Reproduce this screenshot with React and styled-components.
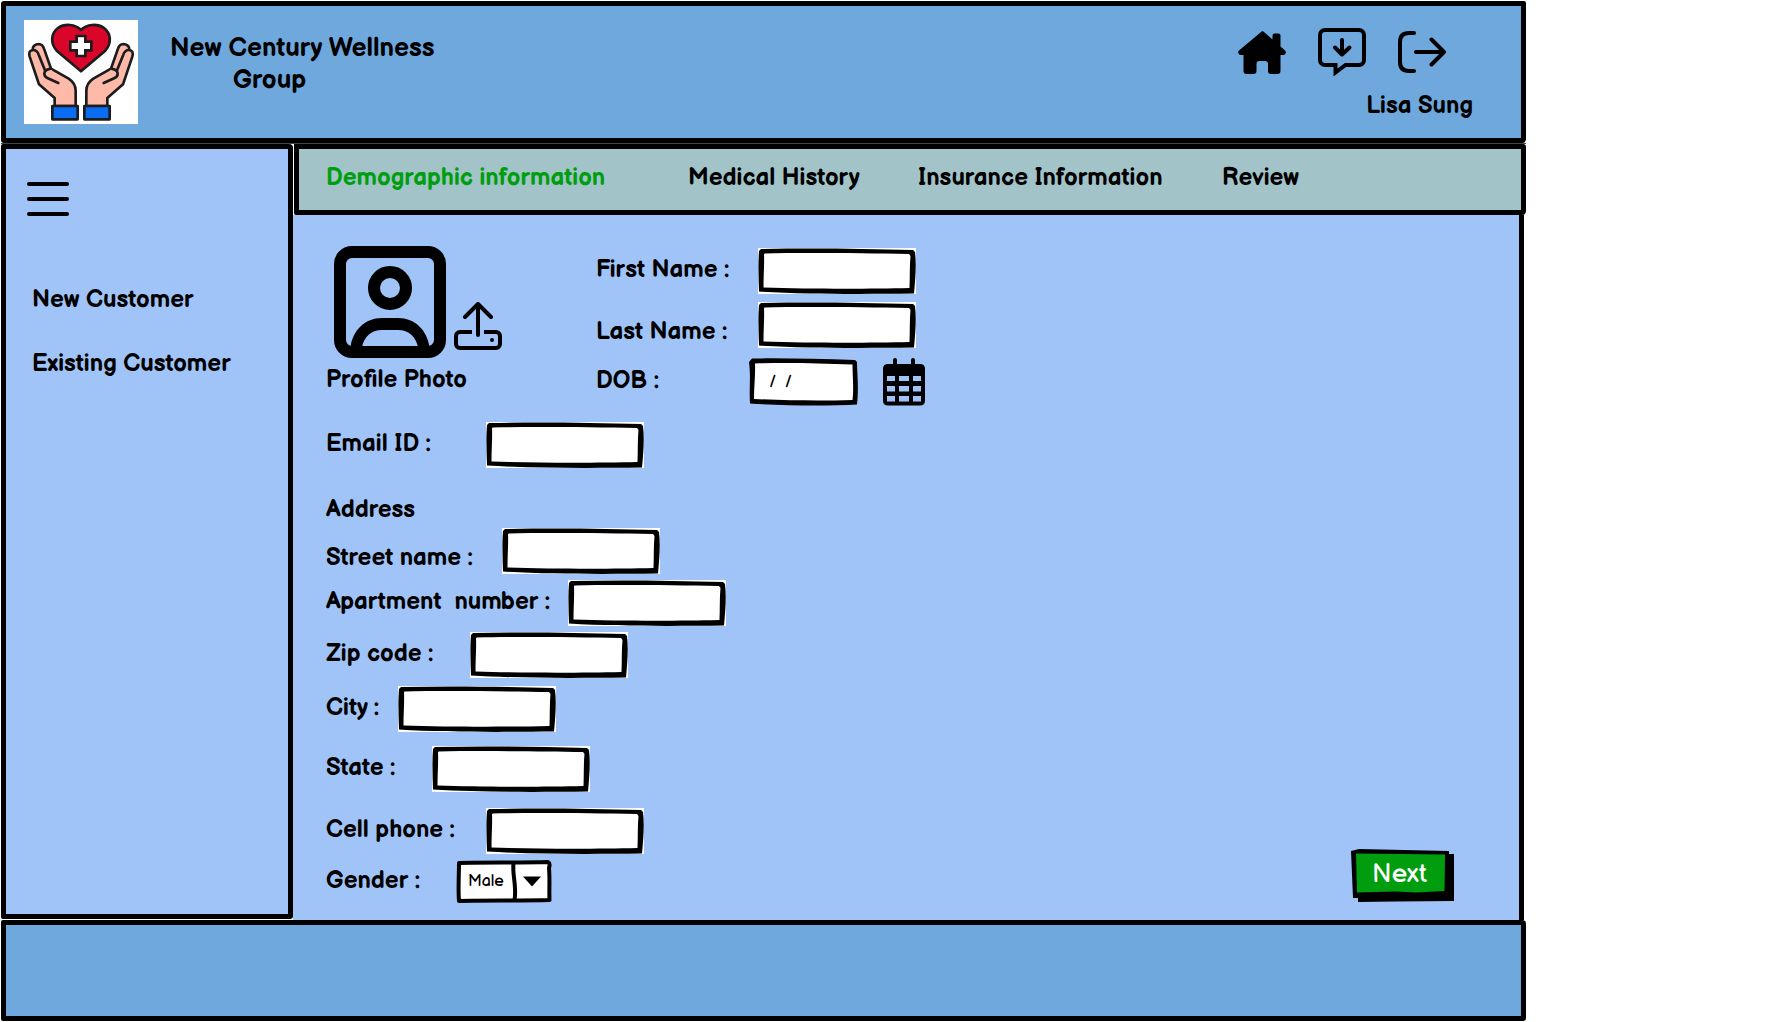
import React from "react";
import styled, { createGlobalStyle } from "styled-components";

const ink = "#000";
const sky = "#6fa8dc";
const mist = "#a0c4f8";
const sage = "#a2c4c9";
const leaf = "#009e0f";
const hand = `"Balsamiq Sans", Lato, "Open Sans", sans-serif`;

/* Hand-drawn frames, used as stretchable backgrounds of the controls. */
const sketch = (w, h, body) =>
  `url("data:image/svg+xml,${encodeURIComponent(
    `<svg xmlns="http://www.w3.org/2000/svg" viewBox="0 0 ${w} ${h}" preserveAspectRatio="none">${body}</svg>`
  )}")`;

const fieldFrame = sketch(
  158,
  46,
  `<rect width="158" height="46" fill="#fff"/>
   <path fill="#000" fill-rule="evenodd" d="M3 1C50 0 100 .5 155 2L157 4C158.500 16 157.500 30 156 45.500C110 46 50 46.500 1 43.500C.5 30 0 15 1 3Z
   M6.500 5.500C50 4.500 110 5.500 151 6L152.500 8C151.500 18 152 30 151.500 40C110 41 50 41 5.500 39.500C5.500 28 6.500 15 6 6.500Z"/>`
);

const dateFrame = sketch(
  109,
  48,
  `<path fill="#fff" d="M3 3H106V44H3Z"/>
   <path fill="#000" fill-rule="evenodd" d="M3 .5C35 0 70 1 106 2L108 4C108 14 110 30 108 46.500C80 48 40 48 1 45.500C0 30 2 20 0 4Z
   M6 5.500C40 4.500 70 5.500 103.500 6.500C103.500 18 105 30 103.500 42C70 43 40 42.500 5 41C5 28 6.500 18 6 5.500Z"/>`
);

const selectFrame = sketch(
  96,
  44,
  `<path fill="#fff" stroke="#000" stroke-width="4" stroke-linejoin="round" d="M3 3C30 2 60 3 92 2C94 3 94 5 93 8C94 20 93 32 93.500 41C60 42 30 41 3 42C2 30 3 15 3 3Z"/>
   <path fill="none" stroke="#000" stroke-width="4" d="M57.500 3C56 16 61 26 58.500 41"/>
   <path fill="#000" d="M67 17H85L76 27Z"/>`
);

const buttonFrame = sketch(
  103,
  53,
  `<path fill="#000" d="M0 2L8 0L98 2V5H103V52L45 52.500L7 53V49H2Z"/>
   <path fill="#009e0f" d="M5 4.500L94 5.500L93.500 42L65 43.500L45 42.500L6 43.500Z"/>`
);

const GlobalStyle = createGlobalStyle`
  *, *::before, *::after { box-sizing: border-box; }
  body {
    margin: 0;
    background: #fff;
    color: ${ink};
    font: 700 24px/28px ${hand};
  }
  a { color: inherit; text-decoration: none; }
  svg { display: block; }
`;

const Page = styled.div`
  padding: 1px 240px 1px 1px;
`;

const Header = styled.header`
  display: flex;
  align-items: flex-start;
  min-height: 142px;
  padding: 14px 48px 14px 18px;
  border: 5px solid ${ink};
  border-radius: 3px 2px 4px 3px;
  background: ${sky};
`;

const LogoBox = styled.a`
  width: 114px;
  height: 104px;
  background: #fff;
`;

const Brand = styled.h1`
  margin: 0;
  padding: 13px 0 0 32px;
  font-size: 26px;
  line-height: 32px;
`;

const BrandTail = styled.span`
  display: block;
  padding-left: 63px;
`;

const Account = styled.div`
  display: flex;
  flex-direction: column;
  align-items: flex-end;
  gap: 16px;
  margin-left: auto;
  padding-top: 8px;
`;

const Toolbar = styled.nav`
  display: flex;
  gap: 32px;
  padding-right: 27px;
`;

const IconButton = styled.button`
  display: block;
  padding: 0;
  border: 0;
  background: none;
  color: inherit;
  cursor: pointer;
`;

const Body = styled.div`
  display: flex;
  border-top: 1px solid #444;
`;

const Sidebar = styled.aside`
  flex: none;
  width: 292px;
  margin-bottom: 1px;
  padding: 33px 16px 16px 21px;
  border: 5px solid ${ink};
  border-radius: 2px 4px 3px 2px;
  background: ${mist};
`;

const SideNav = styled.nav`
  display: flex;
  flex-direction: column;
  gap: 36px;
  margin-top: 68px;
  padding-left: 5px;
`;

const Main = styled.main`
  display: flex;
  flex: 1;
  flex-direction: column;
  min-width: 0;
`;

const Tabs = styled.nav`
  display: grid;
  grid-template-columns: 362px 230px 304px auto;
  min-height: 71px;
  padding: 15px 0 0 27px;
  margin-left: 1px;
  border: 5px solid ${ink};
  border-radius: 0 3px 4px 2px;
  background: ${sage};
`;

const Tab = styled.a`
  color: ${({ $active }) => ($active ? leaf : "inherit")};
`;

const Content = styled.form`
  display: flex;
  flex: 1;
  justify-content: space-between;
  margin-right: 2px;
  padding: 31px 65px 17px 33px;
  border-right: 5px solid ${ink};
  background: ${mist};
`;

const Fields = styled.div`
  display: flex;
  flex-direction: column;
`;

const Intro = styled.div`
  display: grid;
  grid-template-columns: 270px auto;
`;

const Profile = styled.div`
  display: flex;
  flex-direction: column;
  gap: 8px;
`;

const Photo = styled.div`
  display: flex;
  align-items: flex-end;
  gap: 8px;
  padding-left: 8px;
`;

const Upload = styled(IconButton)`
  padding-bottom: 8px;
`;

const Names = styled.div`
  padding-top: 2px;
`;

const Row = styled.div`
  display: flex;
  align-items: center;
  margin-top: ${({ $space = 0 }) => $space}px;
`;

const Label = styled.label`
  width: ${({ $width }) => $width}px;
  padding: ${({ $low }) => ($low ? "14px 0 0" : "0 0 2px")};
  white-space: pre;
`;

const Group = styled.h2`
  margin: 0;
  padding: 28px 0 4px;
  font: inherit;
`;

const TextField = styled.input`
  width: 158px;
  height: 46px;
  padding: 6px 12px;
  border: 0;
  background: ${fieldFrame} center / 100% 100% no-repeat;
  font: 400 16px/20px ${hand};
  outline: 0;
`;

const DateField = styled(TextField)`
  width: 109px;
  height: 48px;
  margin-right: 25px;
  padding: 6px 20px;
  background-image: ${dateFrame};
`;

const Select = styled.select`
  width: 96px;
  height: 43px;
  padding: 0 40px 0 12px;
  border: 0;
  appearance: none;
  background: ${selectFrame} center / 100% 100% no-repeat;
  color: ${ink};
  font: 400 16px/20px ${hand};
  outline: 0;
`;

const NextButton = styled.button`
  align-self: flex-end;
  width: 103px;
  height: 53px;
  margin-bottom: 1px;
  padding: 0 6px 2px 0;
  border: 0;
  background: ${buttonFrame} center / 100% 100% no-repeat;
  color: #fff;
  font: 400 26px/32px ${hand};
  cursor: pointer;
`;

const Footer = styled.footer`
  min-height: 101px;
  border: 5px solid ${ink};
  border-radius: 2px 4px 3px 2px;
  background: ${sky};
`;

const Hand = () => (
  <g stroke="#1c1c1e" strokeWidth="8" strokeLinejoin="round" strokeLinecap="round">
    <path
      fill="#ffb9a8"
      d="M164 318V294L117 253L89 170Q84 152 98 150Q97 134 116 132Q128 133 132 146L153 206L206 236Q227 250 227 272V318Z"
    />
    <path fill="none" d="M98 150Q111 149 116 164L138 218" />
    <path fill="#ffb9a8" d="M153 206Q134 208 133 221Q133 230 142 234L175 249" />
    <path fill="#0a6cf0" d="M157 318H233V358H157Z" />
  </g>
);

const Logo = () => (
  <svg viewBox="72 60 342 312" width="114" height="104" aria-hidden="true">
    <Hand />
    <g transform="translate(486 0) scale(-1 1)">
      <Hand />
    </g>
    <path
      fill="#d9062a"
      stroke="#1c1c1e"
      strokeWidth="8"
      strokeLinejoin="round"
      d="M243 90C226 72 194 70 174 84C152 100 151 130 170 152L243 214L316 152C335 130 334 100 312 84C292 70 260 72 243 90Z"
    />
    <path fill="#fff" stroke="#1c1c1e" strokeWidth="8" d="M230 108H256V125H274V151H256V168H230V151H211V125H230Z" />
  </svg>
);

const HomeIcon = () => (
  <svg viewBox="0 0 48 48" width="48" height="48" aria-hidden="true">
    <path d="M22.500 4.500Q24.500 2 26.500 4.500L34.500 11.500V7.500Q34.500 5.500 36.500 5.500H40.500Q42.500 5.500 42.500 7.500V18.500L47 22.500Q48.500 24 47.500 25.500Q46.500 27 45 27H42.500V43Q42.500 46 39.500 46H33Q30 46 30 43V36Q30 33 27 33H21.500Q18.500 33 18.500 36V43Q18.500 46 15.500 46H8.500Q5.500 46 5.500 43V27H3Q1.500 27 .5 25.500Q-.5 24 1 22.500Z" />
  </svg>
);

const InboxIcon = () => (
  <svg viewBox="0 0 48 48" width="48" height="48" fill="none" stroke="#000" strokeWidth="4" aria-hidden="true">
    <path d="M7 2H41A5 5 0 0 1 46 7V32A5 5 0 0 1 41 37H27.500L17.500 44.500V37H7A5 5 0 0 1 2 32V7A5 5 0 0 1 7 2Z" />
    <path strokeLinecap="round" strokeLinejoin="round" d="M24 12V26M17 19.500L24 26.500L31.500 19.500" />
  </svg>
);

const LogoutIcon = () => (
  <svg viewBox="0 0 48 48" width="48" height="48" fill="none" stroke="#000" strokeWidth="4" strokeLinecap="round" strokeLinejoin="round" aria-hidden="true">
    <path d="M16 5H11Q2 5 2 14V34Q2 43 11 43H16M18 24H46M33.500 11.500L46 24L33.500 36.500" />
  </svg>
);

const MenuIcon = () => (
  <svg viewBox="0 0 42 36" width="42" height="36" stroke="#000" strokeWidth="4" strokeLinecap="round" aria-hidden="true">
    <path d="M2 2H40M2 17H40M2 32H40" />
  </svg>
);

const PortraitIcon = () => (
  <svg viewBox="0 0 112 112" width="112" height="112" aria-label="Profile picture">
    <rect x="6" y="6" width="100" height="100" rx="12" fill="none" stroke="#000" strokeWidth="12" />
    <circle cx="56" cy="42" r="16" fill="none" stroke="#000" strokeWidth="12" />
    <path d="M16.500 101C19 84 31 72 48 72H64C81 72 93 84 95.500 101H84C82 91 75 84 64 84H48C37 84 30 91 28 101Z" />
  </svg>
);

const UploadIcon = () => (
  <svg viewBox="0 0 48 48" width="48" height="48" fill="none" stroke="#000" strokeWidth="4" strokeLinecap="round" strokeLinejoin="round" aria-hidden="true">
    <path d="M24 33V2M11 15L24 2L37 15" />
    <path strokeLinecap="butt" d="M18 30H6A4 4 0 0 0 2 34V42A4 4 0 0 0 6 46H42A4 4 0 0 0 46 42V34A4 4 0 0 0 42 30H30" />
    <circle cx="38" cy="38" r="2" fill="#000" stroke="none" />
  </svg>
);

const CalendarIcon = () => (
  <svg viewBox="0 0 42 48" width="42" height="48" aria-hidden="true">
    <path d="M12 2V9M30 2V9" stroke="#000" strokeWidth="4" strokeLinecap="round" />
    <path
      fillRule="evenodd"
      d="M5 6H37Q42 6 42 11V42.500Q42 47.500 37 47.500H5Q0 47.500 0 42.500V11Q0 6 5 6ZM4 18V23H12V18ZM16 18V23H26V18ZM30 18V23H38V18ZM4 28V33.500H12V28ZM16 28V33.500H26V28ZM30 28V33.500H38V28ZM4 38V43.500H12V38ZM16 38V43.500H26V38ZM30 38V43.500H38V38Z"
    />
  </svg>
);

const tabs = ["Demographic information", "Medical History", "Insurance Information", "Review"];

const addressFields = [
  { id: "street", label: "Street name :", width: 176, space: 0, low: true },
  { id: "apartment", label: "Apartment  number :", width: 242, space: 6 },
  { id: "zip", label: "Zip code :", width: 144, space: 6 },
  { id: "city", label: "City :", width: 72, space: 8 },
  { id: "state", label: "State :", width: 106, space: 14 },
  { id: "phone", label: "Cell phone :", width: 160, space: 16 },
];

function Field({ id, label, width, space, low }) {
  return (
    <Row $space={space}>
      <Label htmlFor={id} $width={width} $low={low}>
        {label}
      </Label>
      <TextField id={id} name={id} type="text" autoComplete="off" />
    </Row>
  );
}

export default function App() {
  return (
    <>
      <GlobalStyle />
      <Page>
        <Header>
          <LogoBox href="#home" aria-label="New Century Wellness Group">
            <Logo />
          </LogoBox>
          <Brand>
            New Century Wellness <BrandTail>Group</BrandTail>
          </Brand>
          <Account>
            <Toolbar aria-label="Account">
              <IconButton type="button" aria-label="Home">
                <HomeIcon />
              </IconButton>
              <IconButton type="button" aria-label="Messages">
                <InboxIcon />
              </IconButton>
              <IconButton type="button" aria-label="Log out">
                <LogoutIcon />
              </IconButton>
            </Toolbar>
            <span>Lisa Sung</span>
          </Account>
        </Header>

        <Body>
          <Sidebar>
            <IconButton type="button" aria-label="Menu">
              <MenuIcon />
            </IconButton>
            <SideNav aria-label="Customers">
              <a href="#new">New Customer</a>
              <a href="#existing">Existing Customer</a>
            </SideNav>
          </Sidebar>

          <Main>
            <Tabs aria-label="Steps">
              {tabs.map((name, i) => (
                <Tab key={name} href={`#step-${i + 1}`} $active={i === 0} aria-current={i === 0 ? "step" : undefined}>
                  {name}
                </Tab>
              ))}
            </Tabs>

            <Content onSubmit={(e) => e.preventDefault()}>
              <Fields>
                <Intro>
                  <Profile>
                    <Photo>
                      <PortraitIcon />
                      <Upload type="button" aria-label="Upload photo">
                        <UploadIcon />
                      </Upload>
                    </Photo>
                    <span>Profile Photo</span>
                  </Profile>
                  <Names>
                    <Field id="first" label="First Name :" width={162} space={0} />
                    <Field id="last" label="Last Name :" width={162} space={8} low />
                    <Row $space={10}>
                      <Label htmlFor="dob" $width={153}>
                        DOB :
                      </Label>
                      <DateField id="dob" name="dob" type="text" defaultValue="/  /" />
                      <IconButton type="button" aria-label="Pick a date">
                        <CalendarIcon />
                      </IconButton>
                    </Row>
                  </Names>
                </Intro>

                <Field id="email" label="Email ID :" width={160} space={16} />
                <Group>Address</Group>
                {addressFields.map((field) => (
                  <Field key={field.id} {...field} />
                ))}
                <Row $space={6}>
                  <Label htmlFor="gender" $width={130}>
                    Gender :
                  </Label>
                  <Select id="gender" name="gender" defaultValue="Male">
                    <option>Male</option>
                    <option>Female</option>
                  </Select>
                </Row>
              </Fields>
              <NextButton type="submit">Next</NextButton>
            </Content>
          </Main>
        </Body>

        <Footer />
      </Page>
    </>
  );
}
